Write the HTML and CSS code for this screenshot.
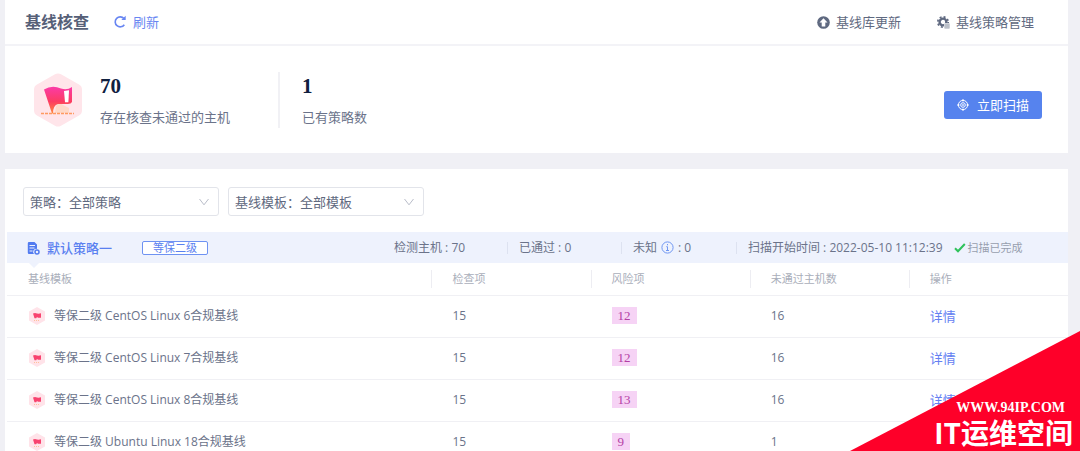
FILE: index.html
```html
<!DOCTYPE html>
<html lang="zh-CN">
<head>
<meta charset="utf-8">
<title>基线核查</title>
<link rel="stylesheet" href="styles.css">
</head>
<body>
<svg class="sprite" width="0" height="0" aria-hidden="true">
  <defs>
    <linearGradient id="flag-fill" x1="0" y1="0" x2="0" y2="1">
      <stop offset="0" stop-color="#fb3aa8"/><stop offset="0.55" stop-color="#fc3c62"/><stop offset="1" stop-color="#ff8a3c"/>
    </linearGradient>
    <symbol id="flag-small" viewBox="0 0 18 20">
      <path d="M9 1l8 4.500v9L9 19l-8-4.500v-9z" fill="#ffe3e9"/>
      <path d="M5 7.500q2-.8 4 0 2 .4 4-.3v4.600H10l-1-.8-.8 1.200H6.500z" fill="#f8436f"/>
      <path d="M6 14.500h6" stroke="#ffc09a" stroke-width="1" stroke-dasharray="1 1"/>
    </symbol>
  </defs>
</svg>
<div class="page">
  <header class="topbar">
    <h1 class="title">基线核查</h1>
    <button type="button" class="link-btn refresh">
      <svg width="14" height="14" viewBox="0 0 14 14"><path d="M11.300 9.700A5 5 0 1 1 11 3.600" fill="none" stroke="currentColor" stroke-width="1.600"/><path d="M8.300 4.900h4.400V.8z" fill="currentColor"/></svg>
      刷新
    </button>
    <nav class="actions">
      <button type="button" class="link-btn">
        <svg width="13" height="13" viewBox="0 0 13 13"><circle cx="6.500" cy="6.500" r="6.300" fill="currentColor"/><path d="M6.500 2.200l4 4.300H8.300v3.900H4.700V6.500H2.500z" fill="#fff"/></svg>
        基线库更新
      </button>
      <button type="button" class="link-btn">
        <svg width="13" height="13" viewBox="0 0 13 13"><circle cx="6" cy="6" r="3.400" fill="none" stroke="currentColor" stroke-width="2.400"/><circle cx="6" cy="6" r="5.200" fill="none" stroke="currentColor" stroke-width="1.700" stroke-dasharray="2 2.080"/><path d="M7 7h6v6H7z" fill="#fff"/><path d="M7.500 7.500h5v5h-5z" fill="currentColor" opacity=".6"/><path d="M8 9h4M8 11h4" stroke="#fff" stroke-width=".6"/></svg>
        基线策略管理
      </button>
    </nav>
  </header>

  <section class="summary">
    <svg class="hex" width="50" height="56" viewBox="0 0 50 56">
      <path d="M22 2.300q3-1.700 6 0l18 10.300q3 1.700 3 5v20.800q0 3.300-3 5L28 53.700q-3 1.700-6 0L4 43.400q-3-1.700-3-5V17.600q0-3.300 3-5z" fill="#ffe5ea"/>
      <path d="M23 34q4-5 7-1l6 3v5H22z" fill="#ffd9c8"/>
      <path d="M11 17.500q8-5 17-1 6 2 11-1.500v15q-1 2-4 2H25q-5 1-5 9.500h-1z" fill="url(#flag-fill)"/>
      <path d="M31 19l5-.8-.6 12h-3.400z" fill="#fff"/>
      <path d="M8 41.500h33" stroke="#ff9a62" stroke-width="1.300" stroke-dasharray="3 1"/>
    </svg>
    <div class="stat stat-first"><strong class="stat-num">70</strong><span>存在核查未通过的主机</span></div>
    <div class="stat stat-next"><strong class="stat-num">1</strong><span>已有策略数</span></div>
    <button type="button" class="scan">
      <svg width="12" height="12" viewBox="0 0 12 12" fill="none" stroke="currentColor"><circle cx="6" cy="6" r="4.600"/><circle cx="6" cy="6" r="2.300"/><circle cx="6" cy="6" r=".5"/><path d="M6 0v2.500M6 9.500V12M0 6h2.500M9.500 6H12"/></svg>
      立即扫描
    </button>
  </section>

  <main class="panel">
    <form class="filters">
      <div class="picker">
        <select aria-label="策略"><option>策略：全部策略</option></select>
        <svg width="12" height="8" viewBox="0 0 12 8"><path d="M1.500 1L6 6.800 10.500 1" fill="none" stroke="#b9bdc9"/></svg>
      </div>
      <div class="picker">
        <select aria-label="基线模板"><option>基线模板：全部模板</option></select>
        <svg width="12" height="8" viewBox="0 0 12 8"><path d="M1.500 1L6 6.800 10.500 1" fill="none" stroke="#b9bdc9"/></svg>
      </div>
    </form>

    <div class="policy">
      <div class="policy-name">
        <svg width="13" height="14" viewBox="0 0 13 14"><path d="M2 1h5.500L10 3.500V8a3 3 0 0 0-3 5H2a1.200 1.200 0 0 1-1.200-1.200V2.200A1.200 1.200 0 0 1 2 1z" fill="#527bf0"/><path d="M2.500 4.500h5.500M2.500 7h5M2.500 10h3" stroke="#eef2fd"/><circle cx="10" cy="11" r="2" fill="none" stroke="#527bf0" stroke-width="1.500"/></svg>
        <strong>默认策略一</strong>
        <span class="tag">等保二级</span>
      </div>
      <span class="fact">检测主机 : 70</span>
      <span class="fact split">已通过 : 0</span>
      <span class="fact split">未知
        <svg width="13" height="13" viewBox="0 0 13 13" fill="none" stroke="#6f96f2"><circle cx="6.500" cy="6.500" r="5.600"/><path d="M6.500 3v1.300M5.300 5.700h1.200v3.500M5 9.500h3"/></svg>
        : 0</span>
      <span class="fact split">扫描开始时间 : 2022-05-10 11:12:39
        <span class="done"><svg width="12" height="10" viewBox="0 0 12 10"><path d="M1 5.200l3 3L10.800 1" fill="none" stroke="#2fc25b" stroke-width="2"/></svg>扫描已完成</span>
      </span>
    </div>

    <table class="list">
      <thead><tr><th scope="col">基线模板</th><th scope="col">检查项</th><th scope="col">风险项</th><th scope="col">未通过主机数</th><th scope="col">操作</th></tr></thead>
      <tbody>
        <tr><td><div class="name"><svg width="18" height="20"><use href="#flag-small"/></svg>等保二级 CentOS Linux 6合规基线</div></td><td>15</td><td><span class="risk">12</span></td><td>16</td><td><a href="#">详情</a></td></tr>
        <tr><td><div class="name"><svg width="18" height="20"><use href="#flag-small"/></svg>等保二级 CentOS Linux 7合规基线</div></td><td>15</td><td><span class="risk">12</span></td><td>16</td><td><a href="#">详情</a></td></tr>
        <tr><td><div class="name"><svg width="18" height="20"><use href="#flag-small"/></svg>等保二级 CentOS Linux 8合规基线</div></td><td>15</td><td><span class="risk">13</span></td><td>16</td><td><a href="#">详情</a></td></tr>
        <tr><td><div class="name"><svg width="18" height="20"><use href="#flag-small"/></svg>等保二级 Ubuntu Linux 18合规基线</div></td><td>15</td><td><span class="risk">9</span></td><td>1</td><td></td></tr>
      </tbody>
    </table>
  </main>
</div>
<aside class="ribbon"><span class="ribbon-url">WWW.94IP.COM</span><span class="ribbon-name">IT运维空间</span></aside>
</body>
</html>
```
FILE: styles.css
```css
* { box-sizing: border-box; }
body {
  margin: 0;
  background: #f0f0f5;
  color: #6b738a;
  font: 12px/20px "Open Sans", "Noto Sans CJK SC", sans-serif;
}
button, select { font: inherit; color: inherit; }
svg { flex: none; }
.sprite { position: absolute; }
.page { height: 100vh; overflow: hidden; padding: 0 12px 0 5px; }

.topbar {
  display: flex;
  align-items: center;
  height: 46px;
  padding: 0 34px 0 20px;
  background: #fff;
  border-bottom: 2px solid #f3f3f7;
}
.title { margin: 0; font-size: 16px; line-height: 24px; color: #566078; }
.link-btn {
  display: flex;
  align-items: center;
  gap: 6px;
  padding: 0;
  border: 0;
  background: none;
  font-size: 13px;
  color: #5f6980;
  cursor: pointer;
}
.refresh { margin-left: 24px; color: #6886f2; }
.actions { display: flex; gap: 36px; margin-left: auto; }

.summary {
  display: flex;
  align-items: center;
  height: 107px;
  padding: 0 26px 0 28px;
  background: #fff;
}
.stat { display: flex; flex-direction: column; gap: 7px; height: 56px; font-size: 13px; }
.stat-first { width: 180px; margin-left: 17px; border-right: 2px solid #f1f1f5; }
.stat-next { margin-left: 22px; }
.stat-num { font: bold 21px/28px "Liberation Serif", serif; color: #10203f; }
.scan {
  display: flex;
  align-items: center;
  gap: 8px;
  height: 28px;
  margin: 10px 0 0 auto;
  padding: 0 13px;
  border: 0;
  border-radius: 3px;
  background: #5683ee;
  color: #fff;
  font-size: 13px;
  cursor: pointer;
}

.panel { margin-top: 16px; padding: 18px 0 0 2px; background: #fff; }
.filters { display: flex; gap: 9px; padding: 0 16px; }
.picker { display: grid; align-items: center; width: 196px; }
.picker select {
  grid-area: 1 / 1;
  height: 29px;
  padding: 0 6px;
  border: 1px solid #e2e4ea;
  border-radius: 3px;
  background: #fff;
  appearance: none;
  font-family: "Noto Sans CJK TC", sans-serif;
  font-size: 13px;
  color: #5f6980;
}
.picker svg { grid-area: 1 / 1; justify-self: end; margin-right: 9px; pointer-events: none; }

.policy {
  display: grid;
  grid-template-columns: 1fr 113px 114px 115px 332px;
  align-items: center;
  height: 31px;
  margin-top: 16px;
  background: #eef2fd;
}
.policy-name { display: flex; align-items: center; gap: 7px; padding-left: 20px; font-size: 13px; color: #5a80f0; }
.policy-name strong { font-weight: 500; }
.tag {
  margin-left: 23px;
  padding: 0 10px;
  border: 1px solid #6e92f2;
  border-radius: 2px;
  background: #fff;
  font-size: 11px;
  line-height: 12px;
}
.fact { display: flex; align-items: center; gap: 4px; height: 20px; white-space: nowrap; }
.split { position: relative; padding-left: 12px; }
.split::before { content: ""; position: absolute; left: 0; top: 4px; height: 12px; border-left: 1px solid #dde2f0; }
.done { display: flex; align-items: center; gap: 2px; margin-left: 7px; font-size: 11px; color: #979eae; }

.list { width: 100%; table-layout: fixed; border-collapse: collapse; }
.list th, .list td { padding: 0 0 0 21px; border-bottom: 1px solid #f0f0f4; text-align: left; }
.list th { position: relative; width: 15%; height: 32px; font-size: 11px; font-weight: 400; color: #a9aeba; }
.list th:first-child { width: 40%; }
.list th + th::before { content: ""; position: absolute; left: 0; top: 7px; height: 18px; border-left: 1px solid #ededf2; }
.list th:first-child::before { content: ""; position: absolute; left: 22px; top: 0; border: 5px solid transparent; border-top-color: #eef2fd; border-bottom: 0; }
.list td { height: 42px; }
.name { display: flex; align-items: center; gap: 8px; }
.list a { color: #6480f2; font-size: 13px; text-decoration: none; }
.risk {
  display: inline-block;
  padding: 0 6px;
  background: #f6d3f5;
  color: #b43fa5;
  font: 13px/17px "Liberation Serif", serif;
}

.ribbon {
  position: fixed;
  right: 0;
  bottom: 0;
  display: flex;
  flex-direction: column;
  align-items: flex-end;
  justify-content: flex-end;
  width: 230px;
  height: 120px;
  padding: 0 7px 3px 0;
  background: #fe0029;
  clip-path: polygon(0 100%, 100% 0, 100% 100%);
  color: #fff;
}
.ribbon-url { padding-right: 8px; font: bold 14px/16px "Liberation Serif", serif; }
.ribbon-name { font: bold 28px/32px "Noto Sans CJK SC", sans-serif; }
```
